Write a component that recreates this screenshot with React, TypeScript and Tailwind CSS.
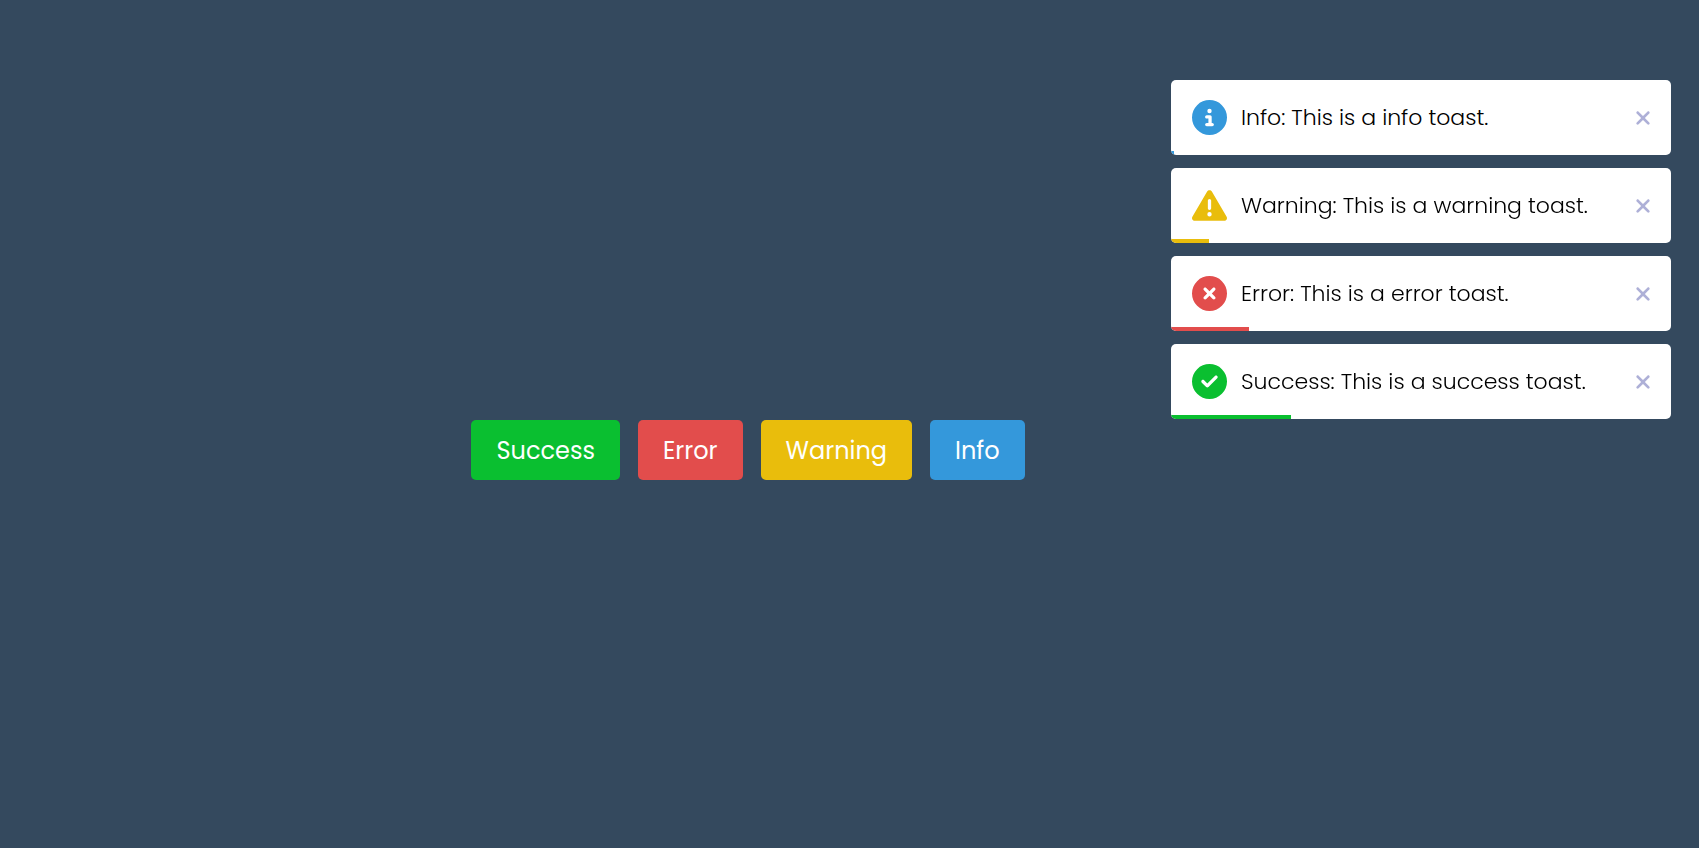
import { useState } from "react";
import {
  FaCircleCheck,
  FaCircleInfo,
  FaCircleXmark,
  FaTriangleExclamation,
  FaXmark,
} from "react-icons/fa6";

const kinds = {
  success: {
    label: "Success",
    text: "Success: This is a success toast.",
    Icon: FaCircleCheck,
    bg: "bg-[#0abf30]",
    fg: "text-[#0abf30]",
  },
  error: {
    label: "Error",
    text: "Error: This is a error toast.",
    Icon: FaCircleXmark,
    bg: "bg-[#e24d4c]",
    fg: "text-[#e24d4c]",
  },
  warning: {
    label: "Warning",
    text: "Warning: This is a warning toast.",
    Icon: FaTriangleExclamation,
    bg: "bg-[#e9bd0c]",
    fg: "text-[#e9bd0c]",
  },
  info: {
    label: "Info",
    text: "Info: This is a info toast.",
    Icon: FaCircleInfo,
    bg: "bg-[#3498db]",
    fg: "text-[#3498db]",
  },
};

type Kind = keyof typeof kinds;
type Toast = { id: number; kind: Kind; remaining: number };

const initialToasts: Toast[] = [
  { id: 4, kind: "info", remaining: 0.6 },
  { id: 3, kind: "warning", remaining: 7.6 },
  { id: 2, kind: "error", remaining: 15.6 },
  { id: 1, kind: "success", remaining: 24 },
];

function ToastItem({ toast, onClose }: { toast: Toast; onClose: () => void }) {
  const { text, Icon, bg, fg } = kinds[toast.kind];
  return (
    <li className="relative flex items-center justify-between overflow-hidden rounded-[5px] bg-white py-5 pr-5 pl-[21px]">
      <div className="flex items-center gap-[14px]">
        <Icon className={`size-[35px] shrink-0 ${fg}`} aria-hidden="true" />
        <span className="text-[22px] leading-[35px] font-light text-black">{text}</span>
      </div>
      <button type="button" aria-label="Close" onClick={onClose} className="cursor-pointer text-[#aeb0d7]">
        <FaXmark className="h-[22px] w-4" aria-hidden="true" />
      </button>
      <div
        className={`absolute bottom-0 left-0 h-1 ${bg}`}
        style={{ width: `${toast.remaining}%` }}
      />
    </li>
  );
}

export default function App() {
  const [toasts, setToasts] = useState<Toast[]>(initialToasts);

  const add = (kind: Kind) =>
    setToasts((list) => [{ id: Date.now(), kind, remaining: 100 }, ...list]);
  const remove = (id: number) => setToasts((list) => list.filter((t) => t.id !== id));

  return (
    <div className="min-h-screen bg-[#34495e] font-[Poppins,Inter,sans-serif] [font-feature-settings:'cv11']">
      <ul className="fixed top-20 right-7 flex w-[500px] flex-col gap-[13px]">
        {toasts.map((t) => (
          <ToastItem key={t.id} toast={t} onClose={() => remove(t.id)} />
        ))}
      </ul>
      <main className="flex min-h-screen items-center justify-center gap-[18px] pt-[52px] pr-[203px]">
        {(Object.keys(kinds) as Kind[]).map((kind) => (
          <button
            key={kind}
            type="button"
            onClick={() => add(kind)}
            className={`cursor-pointer rounded-[5px] px-[25px] pt-[13px] pb-[11px] text-2xl leading-9 text-white ${kinds[kind].bg}`}
          >
            {kinds[kind].label}
          </button>
        ))}
      </main>
    </div>
  );
}
